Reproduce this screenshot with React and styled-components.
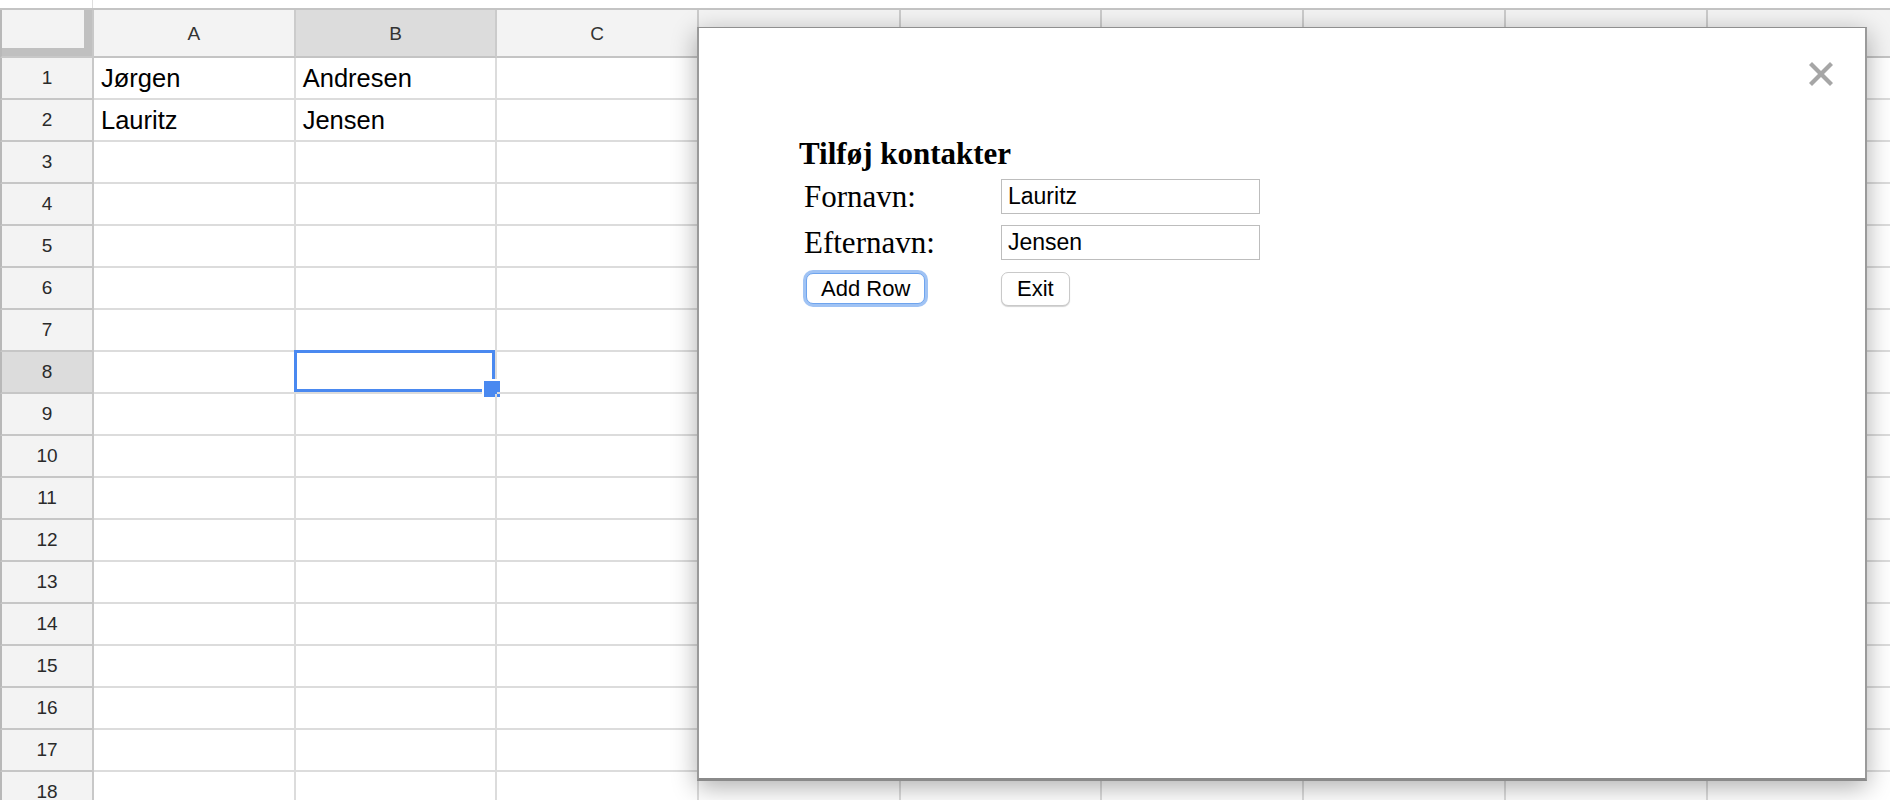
import React from 'react';
import styled, { createGlobalStyle } from 'styled-components';

const GlobalStyle = createGlobalStyle`
  html, body {
    margin: 0;
    padding: 0;
    background: #fff;
    overflow: hidden;
  }
  * {
    box-sizing: border-box;
  }
`;

const COLS = ['A', 'B', 'C', 'D', 'E', 'F', 'G', 'H', 'I'];
const ROWS = Array.from({ length: 18 }, (_, i) => i + 1);
const DATA = {
  1: ['Jørgen', 'Andresen'],
  2: ['Lauritz', 'Jensen']
};
const SELECTED = { row: 8, col: 1 };

const Page = styled.div`
  position: relative;
  width: 1890px;
  height: 800px;
  overflow: hidden;
  font-family: 'Liberation Sans', Arial, sans-serif;
`;

const TopBar = styled.div`
  height: 10px;
  border-bottom: 2px solid #c4c4c4;
  display: grid;
  grid-template-columns: 93px 1fr;
`;

const TopCell = styled.div`
  border-right: 1px solid #dedede;
`;

const Sheet = styled.div`
  display: grid;
  grid-template-columns: 94px repeat(9, 201.7px);
  grid-template-rows: 48px;
  grid-auto-rows: 42px;
`;

const Corner = styled.div`
  background: #f3f3f3;
  border-left: 2px solid #b8b8b8;
  border-right: 2px solid #c8c8c8;
  border-bottom: 2px solid #c8c8c8;
  box-shadow: inset -8px -8px 0 #c0c0c0;
`;

const ColHead = styled.div`
  display: flex;
  align-items: center;
  justify-content: center;
  background: ${props => (props.$selected ? '#dcdcdc' : '#f3f3f3')};
  border-right: 2px solid #cbcbcb;
  border-bottom: 2px solid #c4c4c4;
  color: #333;
  font-size: 19px;
  padding-top: 1px;
`;

const RowHead = styled.div`
  display: flex;
  align-items: center;
  justify-content: center;
  background: ${props => (props.$selected ? '#dcdcdc' : '#f3f3f3')};
  border-left: 2px solid #b8b8b8;
  border-right: 2px solid #c8c8c8;
  border-bottom: 2px solid #c6c6c6;
  color: #2a2a2a;
  font-size: 19px;
`;

const Cell = styled.div`
  position: relative;
  display: flex;
  align-items: center;
  padding-left: 7px;
  border-right: 2px solid #dcdcdc;
  border-bottom: 2px solid #dcdcdc;
  font-size: 25.5px;
  color: #000;
  white-space: nowrap;
`;

const Selection = styled.div`
  position: absolute;
  left: -2px;
  top: -2px;
  right: 0;
  bottom: 0;
  border: 3px solid #4a89f0;

  &::after {
    content: '';
    position: absolute;
    right: -10px;
    bottom: -10px;
    width: 16px;
    height: 16px;
    background: #4a89f0;
    border: 2px solid #fff;
  }
`;

const Modal = styled.div`
  position: absolute;
  left: 697px;
  top: 27px;
  width: 1170px;
  height: 754px;
  background: #fff;
  border-top: 1px solid #8f8f8f;
  border-left: 2px solid #9a9a9a;
  border-right: 2px solid #9a9a9a;
  border-bottom: 3px solid #8a8a8a;
  box-shadow: 0 6px 24px rgba(0, 0, 0, 0.32);
  padding: 108px 0 0 100px;
  font-family: 'Liberation Serif', 'Times New Roman', serif;
  color: #000;
`;

const Close = styled.button`
  position: absolute;
  right: 32px;
  top: 34px;
  width: 24px;
  height: 24px;
  padding: 0;
  border: 0;
  background: transparent;
  cursor: pointer;
  display: flex;
`;

const Title = styled.div`
  font-size: 31px;
  font-weight: bold;
  line-height: 36px;
  margin-bottom: 7px;
`;

const Form = styled.div`
  display: grid;
  grid-template-columns: 197px 259px;
  grid-auto-rows: 35px;
  row-gap: 11px;
  margin-left: 5px;
  align-items: center;
`;

const Label = styled.label`
  font-size: 31px;
  line-height: 34px;
  padding-top: 1px;
`;

const Input = styled.input`
  width: 259px;
  height: 35px;
  border: 1px solid #bdbdbd;
  padding: 0 6px;
  font-family: 'Liberation Sans', Arial, sans-serif;
  font-size: 23px;
  color: #000;
  outline: none;
`;

const Button = styled.button`
  justify-self: start;
  height: ${props => (props.$focused ? '31px' : '34px')};
  margin-left: ${props => (props.$focused ? '2px' : '0')};
  padding: 0 ${props => (props.$focused ? '14px' : '15px')};
  background: #fff;
  border: 1px solid ${props => (props.$focused ? '#6ea4ee' : '#c9c9c9')};
  border-radius: 7px;
  font-family: 'Liberation Sans', Arial, sans-serif;
  font-size: 22px;
  color: #000;
  box-shadow: ${props =>
    props.$focused
      ? '0 0 0 3px rgba(120, 170, 240, 0.7)'
      : '0 1px 1px rgba(0, 0, 0, 0.18)'};
  cursor: pointer;
`;

function CloseIcon() {
  return (
    <svg width="24" height="24" viewBox="0 0 24 24">
      <g stroke="#a6a6a6" strokeWidth="4.2" strokeLinecap="square">
        <line x1="3" y1="3" x2="21" y2="21" />
        <line x1="21" y1="3" x2="3" y2="21" />
      </g>
    </svg>
  );
}

export default function App() {
  return (
    <Page>
      <GlobalStyle />
      <TopBar>
        <TopCell />
        <div />
      </TopBar>
      <Sheet>
        <Corner />
        {COLS.map((c, i) => (
          <ColHead key={c} $selected={i === SELECTED.col}>
            {c}
          </ColHead>
        ))}
        {ROWS.map(r => (
          <React.Fragment key={r}>
            <RowHead $selected={r === SELECTED.row}>{r}</RowHead>
            {COLS.map((c, i) => (
              <Cell key={c}>
                {DATA[r] && DATA[r][i]}
                {r === SELECTED.row && i === SELECTED.col && <Selection />}
              </Cell>
            ))}
          </React.Fragment>
        ))}
      </Sheet>

      <Modal>
        <Close aria-label="Luk">
          <CloseIcon />
        </Close>
        <Title>Tilføj kontakter</Title>
        <Form>
          <Label>Fornavn:</Label>
          <Input defaultValue="Lauritz" />
          <Label>Efternavn:</Label>
          <Input defaultValue="Jensen" />
          <Button $focused>Add Row</Button>
          <Button>Exit</Button>
        </Form>
      </Modal>
    </Page>
  );
}
